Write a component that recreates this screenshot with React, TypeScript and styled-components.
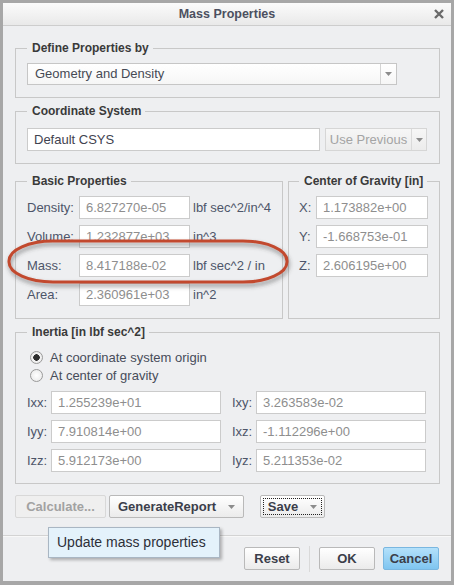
import React from 'react'
import styled, { createGlobalStyle } from 'styled-components'

const GlobalStyle = createGlobalStyle`
  html, body {
    margin: 0;
    padding: 0;
    background: #ffffff;
  }
  body {
    font-family: "Liberation Sans", Arial, sans-serif;
  }
`

const basic = [
  { label: 'Density:', value: '6.827270e-05', unit: 'lbf sec^2/in^4' },
  { label: 'Volume:', value: '1.232877e+03', unit: 'in^3' },
  { label: 'Mass:', value: '8.417188e-02', unit: 'lbf sec^2 / in' },
  { label: 'Area:', value: '2.360961e+03', unit: 'in^2' },
]

const gravity = [
  { label: 'X:', value: '1.173882e+00' },
  { label: 'Y:', value: '-1.668753e-01' },
  { label: 'Z:', value: '2.606195e+00' },
]

const inertia = [
  { label: 'Ixx:', value: '1.255239e+01' },
  { label: 'Ixy:', value: '3.263583e-02' },
  { label: 'Iyy:', value: '7.910814e+00' },
  { label: 'Ixz:', value: '-1.112296e+00' },
  { label: 'Izz:', value: '5.912173e+00' },
  { label: 'Iyz:', value: '5.211353e-02' },
]

const Arrow = () => (
  <svg width="7" height="4" viewBox="0 0 7 4">
    <path d="M0 0 H7 L3.5 4 Z" fill="#8c8c8c" />
  </svg>
)

const MassProperties = () => {
  return (
    <Window>
      <TitleBar>
        <span />
        <Title>Mass Properties</Title>
        <Close>
          <svg width="10" height="10" viewBox="0 0 10 10">
            <path d="M1 1 L9 9 M9 1 L1 9" stroke="#6a6a6a" strokeWidth="2.4" />
          </svg>
        </Close>
      </TitleBar>

      <Body>
        <Group $pad="7px 11px 12px 11px">
          <Legend>Define Properties by</Legend>
          <Select $width={370}>
            <SelectText>Geometry and Density</SelectText>
            <SelectArrow>
              <Arrow />
            </SelectArrow>
          </Select>
        </Group>

        <Group $pad="9px 11px 12px 11px" $top={6}>
          <Legend>Coordinate System</Legend>
          <Line>
            <TextBox $width={293} $dark readOnly value="Default CSYS" />
            <SplitButton>
              <SplitLabel>Use Previous</SplitLabel>
              <SplitArrow>
                <Arrow />
              </SplitArrow>
            </SplitButton>
          </Line>
        </Group>

        <Columns>
          <Group $pad="7px 11px 12px 11px" $width={268}>
            <Legend>Basic Properties</Legend>
            <Rows>
              {basic.map((r) => (
                <Line key={r.label}>
                  <Label $width={52}>{r.label}</Label>
                  <TextBox $width={111} readOnly value={r.value} />
                  <Unit>{r.unit}</Unit>
                </Line>
              ))}
            </Rows>
          </Group>
          <Group $pad="7px 11px 12px 10px" $grow>
            <Legend>Center of Gravity [in]</Legend>
            <Rows>
              {gravity.map((r) => (
                <Line key={r.label}>
                  <Label $width={17}>{r.label}</Label>
                  <TextBox $width={112} readOnly value={r.value} />
                </Line>
              ))}
            </Rows>
          </Group>
        </Columns>

        <Group $pad="8px 11px 11px 11px" $top={6}>
          <Legend>Inertia [in lbf sec^2]</Legend>
          <Radios>
            <RadioRow>
              <RadioDot $checked />
              At coordinate system origin
            </RadioRow>
            <RadioRow>
              <RadioDot />
              At center of gravity
            </RadioRow>
          </Radios>
          <InertiaGrid>
            {inertia.map((r) => (
              <Line key={r.label}>
                <Label $width={24}>{r.label}</Label>
                <TextBox $width={170} readOnly value={r.value} />
              </Line>
            ))}
          </InertiaGrid>
        </Group>

        <Actions>
          <Button $width={91} disabled>
            Calculate...
          </Button>
          <Button $width={135}>
            GenerateReport
            <ButtonArrow>
              <Arrow />
            </ButtonArrow>
          </Button>
          <Button $width={65} $focus>
            <FocusRing>
              Save
              <ButtonArrow>
                <Arrow />
              </ButtonArrow>
            </FocusRing>
          </Button>
        </Actions>
      </Body>

      <Footer>
        <Button $width={56}>Reset</Button>
        <Divider />
        <Button $width={56}>OK</Button>
        <Button $width={56} $primary>
          Cancel
        </Button>
      </Footer>

      <Tooltip>Update mass properties</Tooltip>

      <Highlight width="290" height="56" viewBox="0 0 290 56">
        <defs>
          <filter id="ring-shadow" x="-10%" y="-30%" width="120%" height="160%">
            <feDropShadow dx="1" dy="3" stdDeviation="2" floodColor="#3c3c3c" floodOpacity="0.55" />
          </filter>
        </defs>
        <rect
          x="4"
          y="4"
          width="278"
          height="41"
          rx="44"
          ry="20"
          fill="none"
          stroke="#c24a2f"
          strokeWidth="3"
          filter="url(#ring-shadow)"
        />
      </Highlight>
    </Window>
  )
}

export default function App() {
  return (
    <>
      <GlobalStyle />
      <MassProperties />
    </>
  )
}

const Window = styled.div`
  position: relative;
  width: 454px;
  height: 585px;
  box-sizing: border-box;
  border: 3px solid #a7a7a7;
  border-bottom-width: 4px;
  background: #eeeff1;
  display: flex;
  flex-direction: column;
  overflow: hidden;
`

const TitleBar = styled.div`
  height: 22px;
  flex: 0 0 auto;
  display: grid;
  grid-template-columns: 1fr auto 1fr;
  align-items: center;
  background: linear-gradient(#fbfbfb, #e9e9e9);
  border-bottom: 1px solid #cdcdcd;
`

const Title = styled.div`
  font-size: 12.5px;
  font-weight: bold;
  color: #4c5060;
`

const Close = styled.div`
  justify-self: end;
  margin-right: 7px;
  display: flex;
`

const Body = styled.div`
  padding: 15px 11px 0 12px;
  display: flex;
  flex-direction: column;
`

const Group = styled.fieldset<{ $pad: string; $top?: number; $width?: number; $grow?: boolean }>`
  margin: ${(p) => p.$top ?? 0}px 0 0 0;
  padding: ${(p) => p.$pad};
  border: 1px solid #c8c8c8;
  min-width: 0;
  box-sizing: border-box;
  ${(p) => (p.$width ? `flex: 0 0 ${p.$width}px;` : '')}
  ${(p) => (p.$grow ? 'flex: 1 1 auto;' : '')}
`

const Legend = styled.legend`
  padding: 0 4px 0 5px;
  font-size: 12px;
  line-height: 15px;
  font-weight: bold;
  color: #3a3a3a;
  white-space: nowrap;
`

const Select = styled.div<{ $width: number }>`
  width: ${(p) => p.$width}px;
  height: 22px;
  box-sizing: border-box;
  display: flex;
  border: 1px solid #c6c6c6;
  background: linear-gradient(#ffffff, #f6f6f6);
`

const SelectText = styled.div`
  flex: 1;
  padding-left: 7px;
  font-size: 13px;
  line-height: 20px;
  color: #464a55;
`

const SelectArrow = styled.div`
  width: 15px;
  border-left: 1px solid #d4d4d4;
  display: flex;
  align-items: center;
  justify-content: center;
`

const Line = styled.div`
  display: flex;
  align-items: center;
`

const Rows = styled.div`
  display: flex;
  flex-direction: column;
  gap: 6px;
`

const Columns = styled.div`
  display: flex;
  gap: 5px;
  margin-top: 10px;
`

const Label = styled.div<{ $width: number }>`
  width: ${(p) => p.$width}px;
  flex: 0 0 auto;
  font-size: 13px;
  color: #4d5569;
`

const TextBox = styled.input<{ $width: number; $dark?: boolean }>`
  width: ${(p) => p.$width}px;
  height: 23px;
  box-sizing: border-box;
  margin: 0;
  padding: 0 0 0 6px;
  border: 1px solid #cbcbcb;
  border-radius: 0;
  background: #ffffff;
  font-family: "Liberation Sans", Arial, sans-serif;
  font-size: 13px;
  color: ${(p) => (p.$dark ? '#3f4350' : '#8e8e8e')};
  outline: none;
`

const Unit = styled.div`
  margin-left: 3px;
  font-size: 13px;
  color: #4d5569;
  white-space: nowrap;
`

const SplitButton = styled.div`
  margin-left: 5px;
  width: 102px;
  height: 23px;
  box-sizing: border-box;
  display: flex;
  border: 1px solid #d6d6d6;
  background: linear-gradient(#f6f6f6, #ececec);
`

const SplitLabel = styled.div`
  flex: 1;
  text-align: center;
  font-size: 13px;
  line-height: 21px;
  color: #a4a4a4;
`

const SplitArrow = styled.div`
  width: 14px;
  border-left: 1px solid #dadada;
  display: flex;
  align-items: center;
  justify-content: center;
`

const Radios = styled.div`
  display: flex;
  flex-direction: column;
  padding-left: 3px;
`

const RadioRow = styled.div`
  height: 18px;
  display: flex;
  align-items: center;
  gap: 7px;
  font-size: 13px;
  color: #474c5a;
`

const RadioDot = styled.span<{ $checked?: boolean }>`
  width: 13px;
  height: 13px;
  box-sizing: border-box;
  border-radius: 50%;
  border: 1px solid #9a9a9a;
  background: ${(p) =>
    p.$checked
      ? 'radial-gradient(circle, #2e2e2e 0 3px, #f4f4f4 3.5px, #e2e2e2 100%)'
      : 'radial-gradient(circle, #ffffff 0, #e6e6e6 100%)'};
`

const InertiaGrid = styled.div`
  margin-top: 7px;
  display: grid;
  grid-template-columns: 194px 194px;
  column-gap: 11px;
  row-gap: 6px;
`

const Actions = styled.div`
  display: flex;
  align-items: center;
  gap: 3px;
  margin-top: 11px;

  & > button:nth-child(3) {
    margin-left: 13px;
  }
`

const Button = styled.button<{ $width: number; $primary?: boolean; $focus?: boolean }>`
  width: ${(p) => p.$width}px;
  height: 23px;
  box-sizing: border-box;
  margin: 0;
  padding: ${(p) => (p.$focus ? '2px' : '0')};
  display: flex;
  align-items: center;
  justify-content: center;
  border: 1px solid ${(p) => (p.$primary ? '#7ab7e0' : '#b9b9b9')};
  border-radius: 2px;
  background: ${(p) =>
    p.$primary ? 'linear-gradient(#b4e1fb, #7fc5f0)' : 'linear-gradient(#ffffff, #ebebeb)'};
  font-family: "Liberation Sans", Arial, sans-serif;
  font-size: 13px;
  font-weight: bold;
  color: #3b3e4a;

  &:disabled {
    border-color: #d8d8d8;
    background: #efefef;
    color: #a2a2a2;
  }
`

const FocusRing = styled.span`
  flex: 1;
  align-self: stretch;
  display: flex;
  align-items: center;
  justify-content: center;
  border: 1px dotted #222222;
`

const ButtonArrow = styled.span`
  display: flex;
  margin-left: 12px;
`

const Footer = styled.div`
  margin-top: 17px;
  flex: 1;
  border-top: 1px solid #d3d3d3;
  box-shadow: inset 0 1px 0 #f8f8f8;
  display: flex;
  justify-content: flex-end;
  align-items: flex-start;
  gap: 8px;
  padding: 11px 12px 0 0;
`

const Divider = styled.div`
  width: 1px;
  height: 26px;
  margin: -1px 1px 0 1px;
  background: #d9d9d9;
`

const Tooltip = styled.div`
  position: absolute;
  left: 45px;
  top: 524px;
  width: 172px;
  height: 31px;
  box-sizing: border-box;
  padding-left: 8px;
  border: 1px solid #a9b6c3;
  background: #e4f2fb;
  box-shadow: 2px 2px 3px rgba(0, 0, 0, 0.28);
  font-size: 14px;
  line-height: 29px;
  color: #2c2f38;
`

const Highlight = styled.svg`
  position: absolute;
  left: 2px;
  top: 234px;
  pointer-events: none;
`
